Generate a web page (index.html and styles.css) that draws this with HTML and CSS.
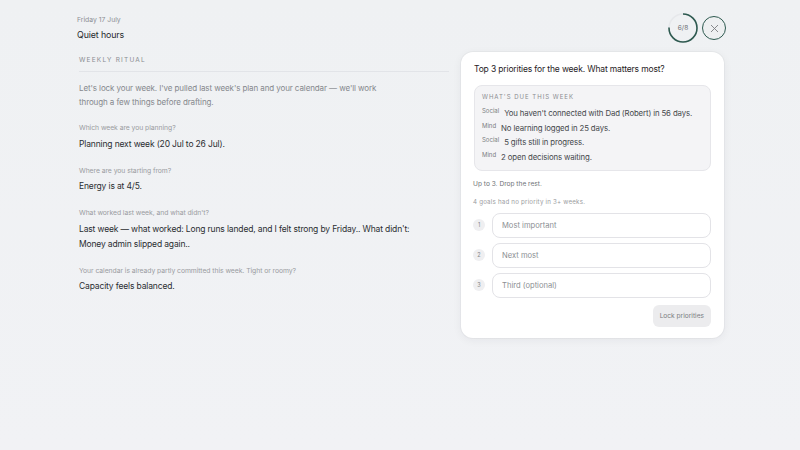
FILE: index.html
```html
<!DOCTYPE html>
<html lang="en">
<head>
<meta charset="utf-8">
<title>Weekly ritual</title>
<link rel="stylesheet" href="styles.css">
</head>
<body>
<div class="page">
  <header class="top">
    <div class="heading">
      <div class="date">Friday 17 July</div>
      <div class="title">Quiet hours</div>
    </div>
    <div class="controls">
      <div class="ring">
        <svg width="32" height="32" viewBox="0 0 32 32">
          <circle cx="16" cy="16" r="14" fill="none" stroke="#e6e8eb" stroke-width="1.5"/>
          <circle cx="16" cy="16" r="14" fill="none" stroke="#2e5a50" stroke-width="1.6" stroke-dasharray="65.97 87.96" transform="rotate(-90 16 16)"/>
        </svg>
        <span class="ring-label">6/8</span>
      </div>
      <button class="close" aria-label="Close">
        <svg width="9" height="9" viewBox="0 0 9 9"><path d="M1 1 L8 8 M8 1 L1 8" stroke="#7a7d80" stroke-width="0.9" fill="none"/></svg>
      </button>
    </div>
  </header>

  <main class="main">
    <section class="ritual">
      <div class="eyebrow">WEEKLY RITUAL</div>
      <p class="intro">Let's lock your week. I've pulled last week's plan and your calendar — we'll work through a few things before drafting.</p>
      <div class="qa">
        <div class="q">Which week are you planning?</div>
        <div class="a">Planning next week (20 Jul to 26 Jul).</div>
      </div>
      <div class="qa">
        <div class="q">Where are you starting from?</div>
        <div class="a">Energy is at 4/5.</div>
      </div>
      <div class="qa">
        <div class="q">What worked last week, and what didn't?</div>
        <div class="a">Last week — what worked: Long runs landed, and I felt strong by Friday.. What didn't: Money admin slipped again..</div>
      </div>
      <div class="qa">
        <div class="q">Your calendar is already partly committed this week. Tight or roomy?</div>
        <div class="a">Capacity feels balanced.</div>
      </div>
    </section>

    <aside class="card">
      <h2 class="card-title">Top 3 priorities for the week. What matters most?</h2>
      <div class="due">
        <div class="due-head">WHAT'S DUE THIS WEEK</div>
        <div class="due-item"><span class="tag">Social</span>You haven't connected with Dad (Robert) in 56 days.</div>
        <div class="due-item"><span class="tag">Mind</span>No learning logged in 25 days.</div>
        <div class="due-item"><span class="tag">Social</span>5 gifts still in progress.</div>
        <div class="due-item"><span class="tag">Mind</span>2 open decisions waiting.</div>
      </div>
      <p class="hint">Up to 3. Drop the rest.</p>
      <p class="note">4 goals had no priority in 3+ weeks.</p>
      <div class="rows">
        <div class="row"><span class="num">1</span><input class="field" placeholder="Most important"></div>
        <div class="row"><span class="num">2</span><input class="field" placeholder="Next most"></div>
        <div class="row"><span class="num">3</span><input class="field" placeholder="Third (optional)"></div>
      </div>
      <div class="actions"><button class="lock">Lock priorities</button></div>
    </aside>
  </main>
</div>
</body>
</html>
```

FILE: styles.css
```css
* { box-sizing: border-box; }
html, body { margin: 0; height: 100%; }
body {
  font-family: Inter, "Noto Sans", sans-serif;
  background: linear-gradient(180deg, #eff1f3 0%, #f1f2f5 100%);
  color: #2a2d31;
  width: 800px;
  height: 450px;
  overflow: hidden;
}
.page {
  padding: 12px 74px 0 77px;
}
.top {
  display: flex;
  justify-content: space-between;
  align-items: center;
  height: 32px;
}
.date {
  font-size: 6.8px;
  color: #8c8f94;
  line-height: 10px;
}
.title {
  font-size: 8.8px;
  letter-spacing: -0.1px;
  color: #25282c;
  line-height: 13px;
  margin-top: 3px;
}
.controls {
  display: flex;
  align-items: center;
  gap: 2px;
}
.ring {
  position: relative;
  width: 32px;
  height: 32px;
  margin-right: 1px;
}
.ring svg { display: block; }
.ring-label {
  position: absolute;
  inset: 0;
  display: flex;
  align-items: center;
  justify-content: center;
  font-size: 6.5px;
  color: #6a6d71;
}
.close {
  width: 24px;
  height: 24px;
  border-radius: 50%;
  border: 1.5px solid #2e5a50;
  background: #eef0f1;
  display: flex;
  align-items: center;
  justify-content: center;
  padding: 0;
}
.main {
  display: flex;
  align-items: flex-start;
  gap: 12px;
  margin-top: 8px;
}
.ritual {
  width: 372px;
  padding: 3px 0 0 2px;
}
.eyebrow {
  font-size: 6.5px;
  letter-spacing: 1.2px;
  color: #8a8d92;
  line-height: 10px;
  padding-bottom: 6px;
  border-bottom: 1px solid #e2e4e8;
}
.intro {
  margin: 9px 0 0;
  font-size: 8px;
  letter-spacing: -0.1px;
  line-height: 14px;
  color: #85888d;
  max-width: 310px;
}
.qa { margin-top: 14px; }
.q {
  font-size: 6.8px;
  letter-spacing: -0.05px;
  color: #9a9ca1;
  line-height: 10px;
}
.a {
  font-size: 8.5px;
  letter-spacing: -0.15px;
  color: #2a2d31;
  line-height: 15px;
  margin-top: 3.5px;
  max-width: 345px;
}
.card {
  width: 263px;
  background: #ffffff;
  border-radius: 12px;
  padding: 11px 13px 11px 12px;
  box-shadow: 0 2px 10px rgba(30, 35, 45, 0.06), 0 0 0 1px rgba(30, 35, 45, 0.03);
}
.card-title {
  margin: 0 0 0 1px;
  font-size: 8.5px;
  letter-spacing: -0.15px;
  font-weight: 400;
  color: #1f2226;
  line-height: 13px;
}
.due {
  margin: 9px 0 0 1px;
  background: #f4f4f6;
  border: 1px solid #e6e6ea;
  border-radius: 8px;
  padding: 6px 7px 5px;
}
.due-head {
  font-size: 6px;
  letter-spacing: 1px;
  color: #8a8c90;
  line-height: 10px;
  margin-bottom: 4px;
}
.due-item {
  font-size: 7.8px;
  letter-spacing: -0.12px;
  color: #45484c;
  line-height: 14.7px;
  height: 14.7px;
}
.tag {
  font-size: 6px;
  line-height: 0;
  letter-spacing: 0;
  color: #7b7e82;
  vertical-align: 3px;
  margin-right: 5px;
}
.hint {
  margin: 8px 0 0;
  font-size: 6.6px;
  color: #6f7276;
  line-height: 11px;
}
.note {
  margin: 6px 0 0;
  font-size: 6.2px;
  letter-spacing: 0.2px;
  color: #9a9ca0;
  line-height: 11px;
}
.rows {
  display: flex;
  flex-direction: column;
  gap: 5px;
  margin-top: 6px;
}
.row {
  display: flex;
  align-items: center;
  gap: 7px;
}
.num {
  width: 12px;
  height: 12px;
  border-radius: 50%;
  background: #efeff1;
  font-size: 5.5px;
  color: #808387;
  display: flex;
  align-items: center;
  justify-content: center;
  flex: none;
}
.field {
  flex: 1;
  height: 25px;
  border: 1px solid #e3e3e7;
  border-radius: 8px;
  padding: 0 9px;
  font-family: inherit;
  font-size: 7.6px;
  color: #2a2d31;
  background: #fff;
  outline: none;
}
.field::placeholder { color: #8c8f93; }
.actions {
  display: flex;
  justify-content: flex-end;
  margin-top: 7px;
}
.lock {
  height: 22px;
  padding: 0 7px;
  border: none;
  border-radius: 6px;
  background: #ececee;
  font-family: inherit;
  font-size: 6.6px;
  color: #7a7d81;
}
```
